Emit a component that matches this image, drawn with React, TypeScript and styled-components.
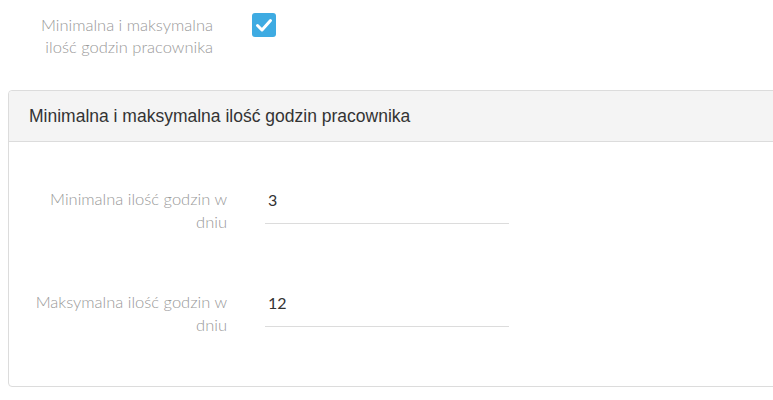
import styled, { createGlobalStyle } from "styled-components";

const GlobalStyle = createGlobalStyle`
  html, body {
    margin: 0;
    padding: 0;
    background: #fff;
    overflow: hidden;
  }
  body {
    font-family: Lato, "Open Sans", sans-serif;
  }
`;

type Field = {
  label: string;
  value: string;
};

const fields: Field[] = [
  { label: "Minimalna ilość godzin w dniu", value: "3" },
  { label: "Maksymalna ilość godzin w dniu", value: "12" },
];

const App = () => {
  return (
    <Page>
      <GlobalStyle />
      <TopRow>
        <TopLabel>
          Minimalna i maksymalna
          <br />
          ilość godzin pracownika
        </TopLabel>
        <CheckBox aria-checked="true" role="checkbox">
          <svg width="24" height="24" viewBox="0 0 24 24">
            <path
              d="M5.5 12.5 L10 17 L18.5 7.5"
              fill="none"
              stroke="#fff"
              strokeWidth="3"
              strokeLinecap="round"
              strokeLinejoin="round"
            />
          </svg>
        </CheckBox>
      </TopRow>

      <Panel>
        <PanelHeader>Minimalna i maksymalna ilość godzin pracownika</PanelHeader>
        <PanelBody>
          {fields.map((f) => (
            <FormRow key={f.label}>
              <FieldLabel>{f.label}</FieldLabel>
              <Input defaultValue={f.value} />
            </FormRow>
          ))}
        </PanelBody>
      </Panel>
    </Page>
  );
};

export default App;

const Page = styled.div`
  width: 773px;
  height: 400px;
  overflow: hidden;
`;

const TopRow = styled.div`
  display: grid;
  grid-template-columns: 213px 24px;
  column-gap: 39px;
  padding-top: 14px;
`;

const TopLabel = styled.div`
  text-align: right;
  font-size: 16.5px;
  font-weight: 300;
  line-height: 22px;
  color: #999;
`;

const CheckBox = styled.div`
  width: 24px;
  height: 24px;
  margin-top: -1px;
  border-radius: 3px;
  background: #3eabe2;
  display: flex;
  align-items: center;
  justify-content: center;
`;

const Panel = styled.div`
  margin: 32px 0 0 8px;
  width: 820px;
  border: 1px solid #dcdcdc;
  border-radius: 4px;
  background: #fff;
`;

const PanelHeader = styled.div`
  height: 50px;
  display: flex;
  align-items: center;
  padding: 0 20px;
  background: #f4f4f4;
  border-bottom: 1px solid #dcdcdc;
  border-radius: 4px 4px 0 0;
  font-family: "Liberation Sans", Arial, sans-serif;
  font-size: 17.5px;
  color: #333;
`;

const PanelBody = styled.div`
  display: flex;
  flex-direction: column;
  gap: 57px;
  padding: 46px 0 49px;
`;

const FormRow = styled.div`
  display: grid;
  grid-template-columns: 218px 244px;
  column-gap: 38px;
  align-items: start;
`;

const FieldLabel = styled.label`
  padding-left: 18px;
  text-align: right;
  font-size: 16.5px;
  font-weight: 300;
  line-height: 23px;
  color: #999;
`;

const Input = styled.input`
  box-sizing: border-box;
  width: 100%;
  height: 36px;
  border: none;
  border-bottom: 1px solid #dcdcdc;
  padding: 0 0 12px 3px;
  font-family: Lato, "Open Sans", sans-serif;
  font-size: 16px;
  line-height: 23px;
  color: #333;
  background: transparent;
  outline: none;
`;
